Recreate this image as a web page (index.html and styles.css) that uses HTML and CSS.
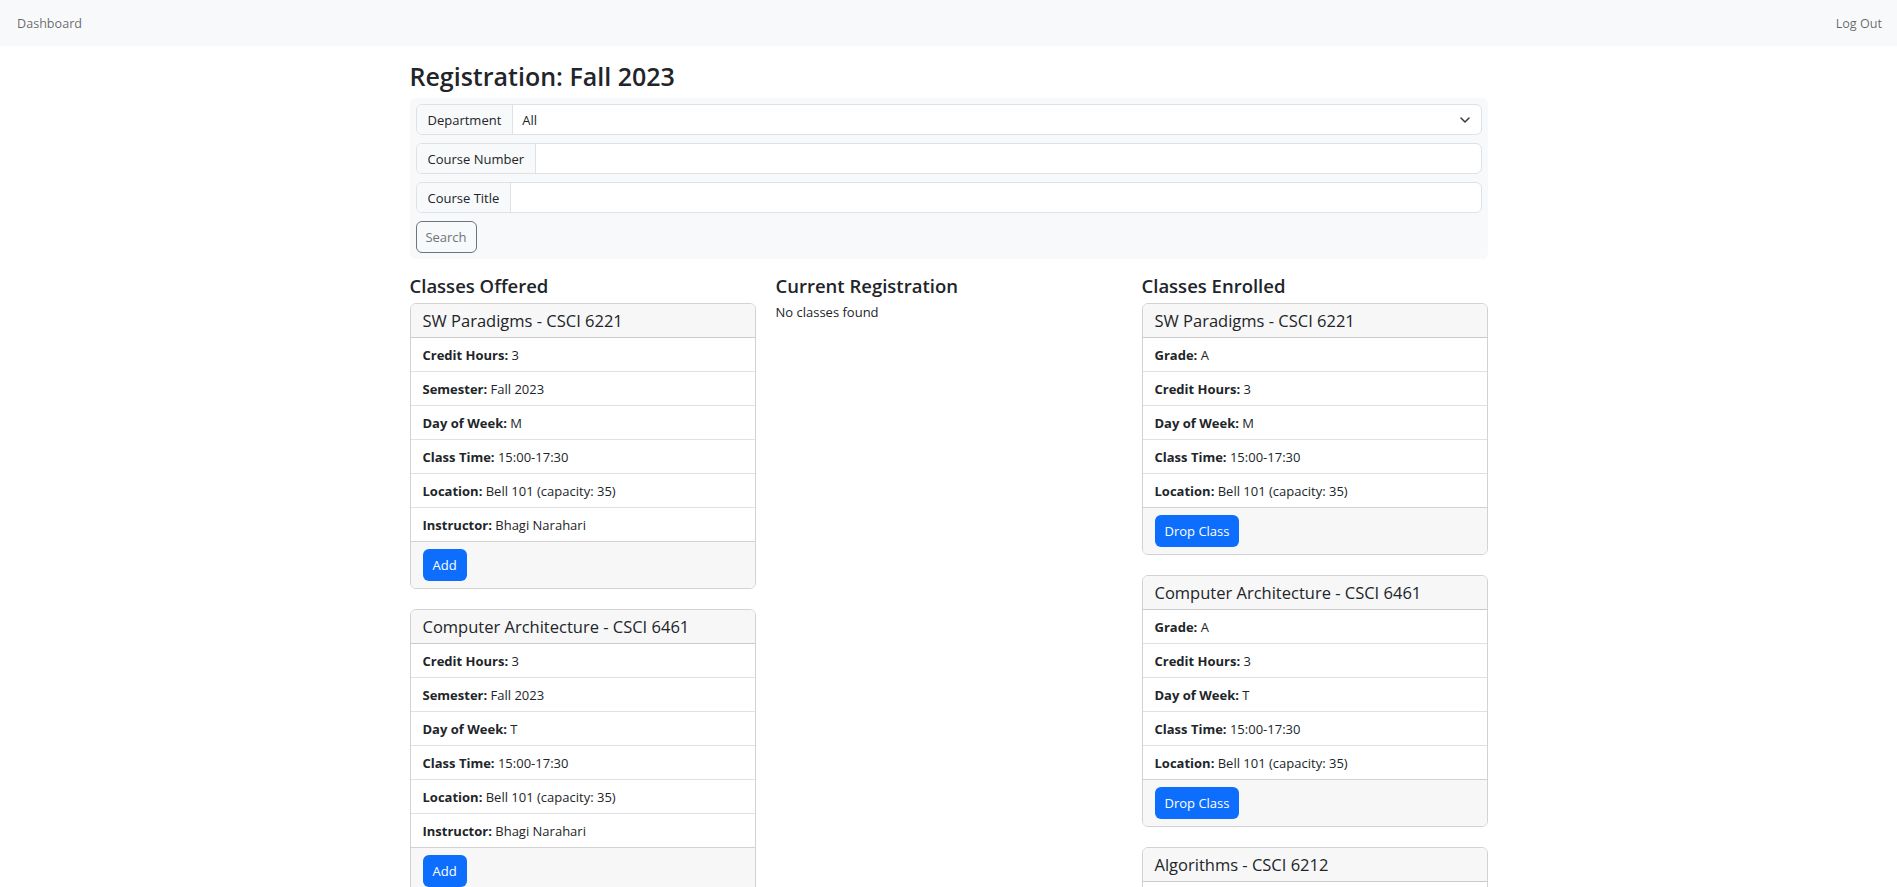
FILE: index.html
```html
<!DOCTYPE html>
<html lang="en">
<head>
<meta charset="utf-8">
<title>Registration</title>
<link rel="stylesheet" href="styles.css">
</head>
<body>
<nav class="navbar">
  <a class="nav-link" href="#">Dashboard</a>
  <a class="nav-link" href="#">Log Out</a>
</nav>
<main class="container">
  <h1 class="page-title">Registration: Fall 2023</h1>
  <form class="search-box">
    <div class="input-group">
      <span class="input-label">Department</span>
      <div class="select">All
        <svg class="chevron" width="10" height="6" viewBox="0 0 10 6"><path d="M1 1l4 4 4-4" fill="none" stroke="#343a40" stroke-width="1.5" stroke-linecap="round" stroke-linejoin="round"/></svg>
      </div>
    </div>
    <div class="input-group">
      <span class="input-label">Course Number</span>
      <div class="input"></div>
    </div>
    <div class="input-group">
      <span class="input-label">Course Title</span>
      <div class="input"></div>
    </div>
    <div><button type="button" class="btn-outline">Search</button></div>
  </form>

  <div class="columns">
    <section class="col">
      <h2 class="col-title">Classes Offered</h2>
      <div class="card">
        <div class="card-header">SW Paradigms - CSCI 6221</div>
        <ul class="list">
          <li><b>Credit Hours:</b> 3</li>
          <li><b>Semester:</b> Fall 2023</li>
          <li><b>Day of Week:</b> M</li>
          <li><b>Class Time:</b> 15:00-17:30</li>
          <li><b>Location:</b> Bell 101 (capacity: 35)</li>
          <li><b>Instructor:</b> Bhagi Narahari</li>
        </ul>
        <div class="card-footer"><button type="button" class="btn-primary">Add</button></div>
      </div>
      <div class="card">
        <div class="card-header">Computer Architecture - CSCI 6461</div>
        <ul class="list">
          <li><b>Credit Hours:</b> 3</li>
          <li><b>Semester:</b> Fall 2023</li>
          <li><b>Day of Week:</b> T</li>
          <li><b>Class Time:</b> 15:00-17:30</li>
          <li><b>Location:</b> Bell 101 (capacity: 35)</li>
          <li><b>Instructor:</b> Bhagi Narahari</li>
        </ul>
        <div class="card-footer"><button type="button" class="btn-primary">Add</button></div>
      </div>
    </section>

    <section class="col">
      <h2 class="col-title">Current Registration</h2>
      <p class="empty">No classes found</p>
    </section>

    <section class="col">
      <h2 class="col-title">Classes Enrolled</h2>
      <div class="card">
        <div class="card-header">SW Paradigms - CSCI 6221</div>
        <ul class="list">
          <li><b>Grade:</b> A</li>
          <li><b>Credit Hours:</b> 3</li>
          <li><b>Day of Week:</b> M</li>
          <li><b>Class Time:</b> 15:00-17:30</li>
          <li><b>Location:</b> Bell 101 (capacity: 35)</li>
        </ul>
        <div class="card-footer"><button type="button" class="btn-primary">Drop Class</button></div>
      </div>
      <div class="card">
        <div class="card-header">Computer Architecture - CSCI 6461</div>
        <ul class="list">
          <li><b>Grade:</b> A</li>
          <li><b>Credit Hours:</b> 3</li>
          <li><b>Day of Week:</b> T</li>
          <li><b>Class Time:</b> 15:00-17:30</li>
          <li><b>Location:</b> Bell 101 (capacity: 35)</li>
        </ul>
        <div class="card-footer"><button type="button" class="btn-primary">Drop Class</button></div>
      </div>
      <div class="card">
        <div class="card-header">Algorithms - CSCI 6212</div>
        <ul class="list">
          <li><b>Grade:</b> A</li>
          <li><b>Credit Hours:</b> 3</li>
          <li><b>Day of Week:</b> W</li>
          <li><b>Class Time:</b> 15:00-17:30</li>
          <li><b>Location:</b> Bell 101 (capacity: 35)</li>
        </ul>
        <div class="card-footer"><button type="button" class="btn-primary">Drop Class</button></div>
      </div>
    </section>
  </div>
</main>
</body>
</html>
```

FILE: styles.css
```css
html, body {
  margin: 0;
  padding: 0;
}
body {
  font-family: "Open Sans", "Noto Sans", sans-serif;
  color: #212529;
  background: #fff;
  font-size: 13px;
}
.navbar {
  height: 46px;
  background: #f8f9fa;
  display: flex;
  align-items: center;
  justify-content: space-between;
  padding: 0 15px 0 17px;
}
.nav-link {
  color: rgba(0, 0, 0, 0.6);
  text-decoration: none;
  font-size: 12.6px;
}
.container {
  width: 1078px;
  margin: 0 auto;
}
.page-title {
  font-size: 25px;
  font-weight: 600;
  margin: 0;
  line-height: 34px;
  height: 52px;
  box-sizing: border-box;
  padding-top: 13px;
}
.search-box {
  background: #f8f9fa;
  border-radius: 6px;
  padding: 6px;
  display: flex;
  flex-direction: column;
  gap: 8px;
  margin: 0;
}
.input-group {
  display: flex;
  height: 31px;
  box-sizing: border-box;
  border: 1px solid #dee2e6;
  border-radius: 6px;
  background: #fff;
  overflow: hidden;
}
.input-label {
  display: flex;
  align-items: center;
  padding: 0 11px;
  background: #f8f9fa;
  border-right: 1px solid #dee2e6;
  font-size: 13px;
}
.select, .input {
  flex: 1;
  display: flex;
  align-items: center;
  padding: 0 9px;
  position: relative;
  font-size: 13px;
}
.chevron {
  position: absolute;
  right: 11px;
  top: 12px;
}
.btn-outline {
  height: 32px;
  width: 61px;
  border: 1px solid #6c757d;
  border-radius: 6px;
  background: transparent;
  color: #6c757d;
  font-family: inherit;
  font-size: 13px;
  padding: 0;
}
.columns {
  display: grid;
  grid-template-columns: repeat(3, 1fr);
  gap: 20px;
  margin-top: 15px;
}
.col-title {
  font-size: 18.5px;
  font-weight: 600;
  line-height: 24px;
  margin: 0 0 5px;
}
.empty {
  margin: 0;
  font-size: 13px;
}
.card {
  border: 1px solid rgba(0, 0, 0, 0.175);
  border-radius: 6px;
  margin-bottom: 20px;
  overflow: hidden;
}
.card-header {
  height: 34px;
  box-sizing: border-box;
  background: #f7f7f7;
  border-bottom: 1px solid rgba(0, 0, 0, 0.175);
  display: flex;
  align-items: center;
  padding: 0 12px;
  font-size: 16.5px;
}
.list {
  list-style: none;
  margin: 0;
  padding: 0;
}
.list li {
  height: 34px;
  box-sizing: border-box;
  display: flex;
  align-items: center;
  padding: 0 12px;
  border-bottom: 1px solid #dee2e6;
  font-size: 13px;
  white-space: pre;
}
.list li:last-child {
  border-bottom: 1px solid rgba(0, 0, 0, 0.175);
}
.list b {
  font-weight: 700;
}
.card-footer {
  background: #f7f7f7;
  padding: 7px 12px;
  height: 46px;
  box-sizing: border-box;
}
.btn-primary {
  height: 32px;
  background: #0d6efd;
  border: none;
  border-radius: 6px;
  color: #fff;
  font-family: inherit;
  font-size: 13px;
  padding: 0 10px;
}
```
